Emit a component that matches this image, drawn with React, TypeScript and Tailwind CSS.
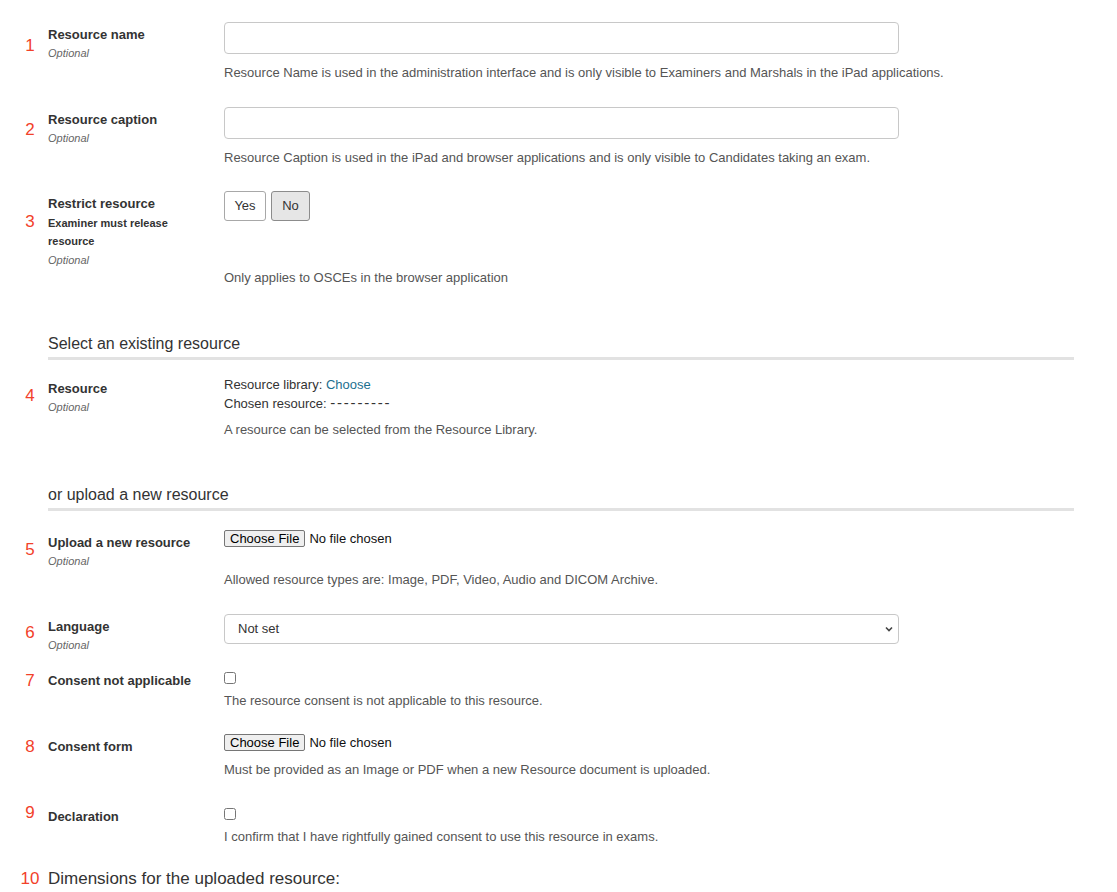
import React, { useState } from "react";

const FONT = { fontFamily: '"Liberation Sans", Arial, sans-serif' };

function Num({ n, top }: { n: string; top: string }) {
  return (
    <div className="w-[36px] shrink-0 text-center">
      <span className={`block text-[17px] leading-[20px] text-[#f2412a] ${top}`}>{n}</span>
    </div>
  );
}

function Label({ title, sub, optional = true }: { title: string; sub?: string; optional?: boolean }) {
  return (
    <div className="w-[176px] shrink-0 pt-[5px] text-[#333]">
      <div className="text-[13px] leading-[16px] font-bold">{title}</div>
      {sub && <div className="mt-[2px] w-[130px] text-[11px] leading-[18px] font-bold">{sub}</div>}
      {optional && <div className="mt-[2px] text-[11px] leading-[16px] italic text-[#666]">Optional</div>}
    </div>
  );
}

function Help({ children, className }: { children: React.ReactNode; className: string }) {
  return <p className={`whitespace-nowrap text-[13px] leading-[18px] text-[#555] ${className}`}>{children}</p>;
}

function Row({
  n,
  numTop,
  className,
  label,
  children,
}: {
  n: string;
  numTop: string;
  className?: string;
  label: React.ReactNode;
  children: React.ReactNode;
}) {
  return (
    <div className={`flex items-start ${className ?? ""}`}>
      <Num n={n} top={numTop} />
      {label}
      <div className="min-w-0 flex-1">{children}</div>
    </div>
  );
}

function SectionHeading({ children, className }: { children: React.ReactNode; className: string }) {
  return (
    <div className={`ml-[36px] w-[1026px] border-b-[3px] border-[#e2e2e2] pb-[3px] ${className}`}>
      <h2 className="text-[16px] leading-[20px] text-[#333]">{children}</h2>
    </div>
  );
}

const textInput = "block h-[32px] w-[675px] rounded-[4px] border border-[#c8c8c8] bg-white px-[10px] text-[13px] outline-none";
const fileInput =
  "block text-[13px] leading-[15px] text-[#111] file:mr-[4px] file:rounded-[2px] file:border file:border-[#767676] file:bg-[#efefef] file:px-[5px] file:py-0 file:text-[13px] file:leading-[15px] file:text-black";

export default function App() {
  const [restrict, setRestrict] = useState(false);

  return (
    <div className="min-h-[892px] bg-white pl-[12px] pt-[22px] text-[#333]" style={FONT}>
      <Row n="1" numTop="mt-[14px]" label={<Label title="Resource name" />}>
        <input type="text" className={textInput} />
        <Help className="mt-[10px]">
          Resource Name is used in the administration interface and is only visible to Examiners and Marshals in the iPad applications.
        </Help>
      </Row>

      <Row n="2" numTop="mt-[13px]" className="mt-[25px]" label={<Label title="Resource caption" />}>
        <input type="text" className={textInput} />
        <Help className="mt-[10px]">
          Resource Caption is used in the iPad and browser applications and is only visible to Candidates taking an exam.
        </Help>
      </Row>

      <Row
        n="3"
        numTop="mt-[21px]"
        className="mt-[24px]"
        label={<Label title="Restrict resource" sub="Examiner must release resource" />}
      >
        <div className="flex gap-[5px]">
          <button
            onClick={() => setRestrict(true)}
            className={`h-[30px] w-[42px] rounded-[3px] border text-[13px] ${
              restrict ? "border-[#8c8c8c] bg-[#e6e6e6]" : "border-[#a8a8a8] bg-white"
            }`}
          >
            Yes
          </button>
          <button
            onClick={() => setRestrict(false)}
            className={`h-[30px] w-[39px] rounded-[3px] border text-[13px] ${
              !restrict ? "border-[#8c8c8c] bg-[#e6e6e6]" : "border-[#a8a8a8] bg-white"
            }`}
          >
            No
          </button>
        </div>
        <Help className="mt-[48px]">Only applies to OSCEs in the browser application</Help>
      </Row>

      <SectionHeading className="mt-[47px]">Select an existing resource</SectionHeading>

      <Row n="4" numTop="mt-[10px]" className="mt-[16px]" label={<Label title="Resource" />}>
        <div className="text-[13px] leading-[18px] text-[#333]">
          Resource library: <a href="#" className="text-[#1d6f8f]">Choose</a>
        </div>
        <div className="text-[13px] leading-[18px] text-[#333]">
          Chosen resource: <span className="text-[15px] tracking-[1.8px]">---------</span>
        </div>
        <Help className="mt-[8px]">A resource can be selected from the Resource Library.</Help>
      </Row>

      <SectionHeading className="mt-[46px]">or upload a new resource</SectionHeading>

      <Row n="5" numTop="mt-[10px]" className="mt-[19px]" label={<Label title="Upload a new resource" />}>
        <input type="file" className={fileInput} />
        <Help className="mt-[24px]">Allowed resource types are: Image, PDF, Video, Audio and DICOM Archive.</Help>
      </Row>

      <Row n="6" numTop="mt-[9px]" className="mt-[25px]" label={<Label title="Language" />}>
        <div className="relative w-[675px]">
          <select className="block h-[30px] w-[675px] appearance-none rounded-[4px] border border-[#c8c8c8] bg-white pl-[13px] text-[13px] text-[#333] outline-none">
            <option>Not set</option>
          </select>
          <svg
            className="pointer-events-none absolute right-[6px] top-[12px]"
            width="8"
            height="6"
            viewBox="0 0 8 6"
            fill="none"
          >
            <path d="M1 1.5 L4 4.5 L7 1.5" stroke="#444" strokeWidth="1.6" />
          </svg>
        </div>
      </Row>

      <Row n="7" numTop="mt-[3px]" className="mt-[15px]" label={<Label title="Consent not applicable" optional={false} />}>
        <input type="checkbox" className="mt-[4px] block h-[12px] w-[12px]" />
        <Help className="mt-[8px]">The resource consent is not applicable to this resource.</Help>
      </Row>

      <Row n="8" numTop="mt-[3px]" className="mt-[24px]" label={<Label title="Consent form" optional={false} />}>
        <input type="file" className={fileInput} />
        <Help className="mt-[10px]">Must be provided as an Image or PDF when a new Resource document is uploaded.</Help>
      </Row>

      <Row n="9" numTop="mt-[-1px]" className="mt-[25px]" label={<Label title="Declaration" optional={false} />}>
        <input type="checkbox" className="mt-[4px] block h-[12px] w-[12px]" />
        <Help className="mt-[8px]">I confirm that I have rightfully gained consent to use this resource in exams.</Help>
      </Row>

      <div className="mt-[22px] flex items-center">
        <div className="w-[36px] shrink-0 text-center text-[17px] leading-[22px] text-[#f2412a]">10</div>
        <h2 className="text-[17px] leading-[22px] text-[#333]">Dimensions for the uploaded resource:</h2>
      </div>
    </div>
  );
}
